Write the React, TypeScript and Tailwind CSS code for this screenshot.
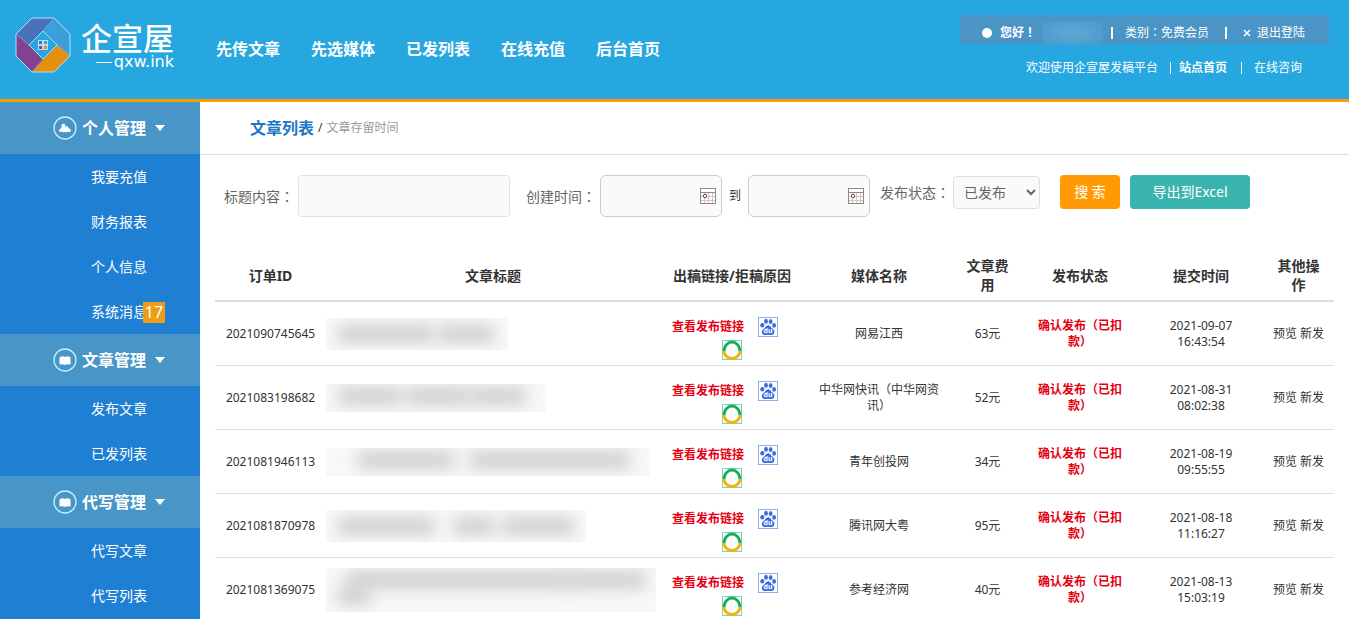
import React from 'react';

interface Article {
  id: string;
  media: string;
  fee: string;
  date: string;
  time: string;
  maskClass: string;
  blobs: string[];
}

interface MenuGroup {
  title: string;
  icon: 'user' | 'book';
  items: { label: string; badge?: number }[];
}

const navItems = ['先传文章', '先选媒体', '已发列表', '在线充值', '后台首页'];

const menuGroups: MenuGroup[] = [
  {
    title: '个人管理',
    icon: 'user',
    items: [
      { label: '我要充值' },
      { label: '财务报表' },
      { label: '个人信息' },
      { label: '系统消息', badge: 17 },
    ],
  },
  {
    title: '文章管理',
    icon: 'book',
    items: [{ label: '发布文章' }, { label: '已发列表' }],
  },
  {
    title: '代写管理',
    icon: 'book',
    items: [{ label: '代写文章' }, { label: '代写列表' }],
  },
];

const articles: Article[] = [
  {
    id: '2021090745645',
    media: '网易江西',
    fee: '63元',
    date: '2021-09-07',
    time: '16:43:54',
    maskClass: 'w-[182px] h-8',
    blobs: ['left-3 top-2 w-24 h-4', 'left-28 top-2 w-14 h-4'],
  },
  {
    id: '2021083198682',
    media: '中华网快讯（中华网资讯）',
    fee: '52元',
    date: '2021-08-31',
    time: '08:02:38',
    maskClass: 'w-[220px] h-7',
    blobs: ['left-3 top-1 w-16 h-4', 'left-20 top-1 w-16 h-4', 'left-36 top-1 w-14 h-4'],
  },
  {
    id: '2021081946113',
    media: '青年创投网',
    fee: '34元',
    date: '2021-08-19',
    time: '09:55:55',
    maskClass: 'w-[324px] h-7',
    blobs: ['left-8 top-1 w-24 h-4', 'left-36 top-1 w-40 h-4'],
  },
  {
    id: '2021081870978',
    media: '腾讯网大粤',
    fee: '95元',
    date: '2021-08-18',
    time: '11:16:27',
    maskClass: 'w-[260px] h-8',
    blobs: ['left-3 top-2 w-24 h-4', 'left-32 top-2 w-10 h-4', 'left-44 top-2 w-18 h-4'],
  },
  {
    id: '2021081369075',
    media: '参考经济网',
    fee: '40元',
    date: '2021-08-13',
    time: '15:03:19',
    maskClass: 'w-[330px] h-11',
    blobs: ['left-5 top-1 w-56 h-4', 'left-60 top-1 w-20 h-4', 'left-3 top-5 w-8 h-4'],
  },
];

// full-width mark centred in its box
const Mark = ({ children }: { children: string }) => (
  <span lang="zh-TW" className="font-['Noto_Sans_CJK_TC',sans-serif]">
    {children}
  </span>
);

const Logo = () => (
  <a href="#" className="flex items-center gap-2.5 text-white">
    <svg width="56" height="56" viewBox="0 0 56 56">
      <path d="M17 1H39L28 14L14 28L1 17Z" fill="#4a72b8" />
      <path d="M39 1L55 17V39L42 28L28 14Z" fill="#3a9fdc" />
      <path d="M1 17L14 28L28 43L17 55L1 39Z" fill="#83428f" />
      <path d="M43 28L55 39L39 55H17L28 43Z" fill="#e6900f" />
      <path d="M28 14L42 28L28 42L14 28Z" fill="#28a6e0" stroke="#a8dcf5" />
      <path d="M17 1H39L55 17V39L39 55H17L1 39V17Z" fill="none" stroke="#b5dff5" />
      <path d="M14 28L1 17M28 14L39 1M42 28L55 39M28 42L17 55" stroke="#7fb4de" strokeWidth="0.7" />
      <rect x="23.5" y="23.5" width="4" height="4" fill="#4a72b8" stroke="#b9dcf0" />
      <rect x="28.5" y="23.5" width="4" height="4" fill="#3a9fdc" stroke="#b9dcf0" />
      <rect x="23.5" y="28.5" width="4" height="4" fill="#83428f" stroke="#b9dcf0" />
      <rect x="28.5" y="28.5" width="4" height="4" fill="#e6900f" stroke="#b9dcf0" />
    </svg>
    <span className="flex flex-col items-end gap-px pt-1">
      <span className="text-[31px] leading-[29px] font-medium">企宣屋</span>
      <span className="flex items-center gap-0.5 font-['DejaVu_Sans',sans-serif] text-base leading-4">
        <span className="w-4 h-px bg-white" />
        qxw.ink
      </span>
    </span>
  </a>
);

const GroupIcon = ({ type }: { type: 'user' | 'book' }) => (
  <svg width="24" height="24" viewBox="0 0 24 24">
    <circle cx="12" cy="12" r="11" fill="none" stroke="#c9ecfa" strokeWidth="1.3" />
    {type === 'user' ? (
      <path
        d="M6 15.5C6 13.5 7 12.5 8.5 12.2C8 9 9 7.8 10.5 7.8C12.2 7.8 12.6 9.5 12.2 11C13 9.8 15.5 9.6 15.4 12.2C17 12.5 18 13.3 18 15.5Q12 17 6 15.5Z"
        fill="#fff"
      />
    ) : (
      <path d="M6.5 9.5Q9.5 7.5 12 9Q14.5 7.5 17.5 9.5V16.5Q14.5 15.8 12 17Q9.5 15.8 6.5 16.5Z" fill="#fff" />
    )}
  </svg>
);

const CalendarIcon = () => (
  <svg width="16" height="16" viewBox="0 0 16 16" className="absolute right-1.5 top-[13px] pointer-events-none">
    <rect x="0.5" y="0.5" width="15" height="15" fill="#fff" stroke="#8b8b8b" />
    <path d="M0.5 4.5H15.5" stroke="#8b8b8b" />
    <path d="M1 8.5H15M1 12.5H15M4.5 5V15M8.5 5V15M12.5 5V15" stroke="#cfc6c2" />
    <circle cx="5" cy="8" r="1.7" fill="#fff" stroke="#8a3a34" />
  </svg>
);

const BaiduIcon = () => (
  <svg width="20" height="20" viewBox="0 0 20 20">
    <rect x="0.5" y="0.5" width="19" height="19" fill="#fff" stroke="#8fb2e0" />
    <g fill="#3f68e4">
      <ellipse cx="4.3" cy="8.3" rx="2" ry="2.3" />
      <ellipse cx="8" cy="4.3" rx="1.9" ry="2.5" />
      <ellipse cx="12.6" cy="4.4" rx="1.9" ry="2.5" />
      <ellipse cx="16.1" cy="8.4" rx="1.9" ry="2.3" />
      <path d="M10.2 8.2C12 8.2 12.6 9.8 13.8 11C15.4 12.4 16.8 13.4 16.4 15.6C16 17.8 14 18.3 12.6 18Q10.2 17.5 7.8 18C6.2 18.3 4.2 17.8 3.9 15.6C3.6 13.4 5.2 12.4 6.6 11C7.8 9.8 8.4 8.2 10.2 8.2Z" />
    </g>
    <text x="10" y="16" textAnchor="middle" fill="#fff" className="text-[7px] font-bold">
      du
    </text>
  </svg>
);

const SoIcon = () => (
  <svg width="20" height="20" viewBox="0 0 20 20">
    <rect x="0.5" y="0.5" width="19" height="19" fill="#fff" stroke="#8ecfa0" />
    <path d="M2 11A8 9 0 0 1 18 11" fill="none" stroke="#17b35c" strokeWidth="3" />
    <path d="M2 11A8 7.5 0 0 0 18 11" fill="none" stroke="#e8b71c" strokeWidth="3" />
  </svg>
);

const Header = () => (
  <header className="flex h-[102px] shrink-0 items-start justify-between border-b-[3px] border-[#ff9900] bg-[#27a7e0] text-white">
    <div className="flex pl-[15px] pt-[17px]">
      <Logo />
      <nav className="ml-[42px] flex items-center gap-[31px] pt-2 text-base font-bold">
        {navItems.map((item) => (
          <a key={item} href="#" className="whitespace-nowrap">
            {item}
          </a>
        ))}
      </nav>
    </div>

    <div className="mr-5 flex flex-col items-end whitespace-nowrap pt-[15px] text-xs">
      <div className="flex h-[29px] items-center rounded bg-[#4a94c6] pl-[22px] pr-6 pt-1.5">
        <span className="h-2.5 w-2.5 rounded-full bg-white" />
        <span className="ml-2 w-9 font-bold">
          您好<Mark>！</Mark>
        </span>
        <span className="ml-[7px] h-6 w-[60px] rounded-sm bg-[radial-gradient(ellipse,#62a8d2,#4599cf)]" />
        <span className="ml-2 h-3 w-0.5 bg-white" />
        <span className="ml-3">
          类别<Mark>：</Mark>免费会员
        </span>
        <span className="ml-4 h-3 w-0.5 bg-white" />
        <a href="#" className="ml-4 flex items-center gap-1.5">
          <svg width="8" height="8" viewBox="0 0 8 8">
            <path d="M1 1L7 7M7 1L1 7" stroke="#fff" strokeWidth="1.5" />
          </svg>
          退出登陆
        </a>
      </div>
      <div className="mr-[27px] mt-3.5 flex items-center leading-5">
        <span>欢迎使用企宣屋发稿平台</span>
        <span className="ml-3 h-3 w-px bg-white" />
        <a href="#" className="ml-2 font-bold">
          站点首页
        </a>
        <span className="ml-3.5 h-3 w-px bg-white" />
        <a href="#" className="ml-3">
          在线咨询
        </a>
      </div>
    </div>
  </header>
);

const Sidebar = () => (
  <aside className="w-[200px] shrink-0 bg-[#1f7fd3] text-white">
    {menuGroups.map((group) => (
      <div key={group.title}>
        <button className="flex h-[52px] w-full items-center bg-[#4796c7] pl-[53px] text-base font-bold">
          <GroupIcon type={group.icon} />
          <span className="ml-[5px]">{group.title}</span>
          <span className="ml-[9px] border-x-[5px] border-t-[6px] border-x-transparent border-t-white" />
        </button>
        <ul>
          {group.items.map((item) => (
            <li key={item.label} className="flex h-[45px] items-center pl-[91px] text-sm">
              <a href="#" className="relative">
                {item.label}
                {item.badge && (
                  <span className="absolute -right-[18px] top-0 h-[21px] w-[22px] bg-[#ee9b16] text-center text-base leading-[21px]">
                    {item.badge}
                  </span>
                )}
              </a>
            </li>
          ))}
        </ul>
      </div>
    ))}
  </aside>
);

const FilterBar = () => (
  <form className="flex items-start pl-6 pt-5 text-sm text-[#666]">
    <div className="flex h-[42px] items-center">
      <label htmlFor="title" className="w-[74px]">
        标题内容<Mark>：</Mark>
      </label>
      <input id="title" type="text" className="h-[42px] w-[212px] rounded border border-[#e0e0e0] bg-[#fafafa] px-2" />
      <label htmlFor="start" className="ml-4 w-[74px]">
        创建时间<Mark>：</Mark>
      </label>
      <span className="relative">
        <input
          id="start"
          type="text"
          className="block h-[42px] w-[122px] rounded-md border border-[#ccc] bg-[#fafafa] pl-2 pr-6"
        />
        <CalendarIcon />
      </span>
      <label htmlFor="end" className="ml-[7px] w-[19px] text-xs text-[#333]">
        到
      </label>
      <span className="relative">
        <input
          id="end"
          type="text"
          className="block h-[42px] w-[122px] rounded-md border border-[#ccc] bg-[#fafafa] pl-2 pr-6"
        />
        <CalendarIcon />
      </span>
    </div>
    <div className="flex h-[34px] items-center">
      <label htmlFor="status" className="ml-2.5 w-[73px]">
        发布状态<Mark>：</Mark>
      </label>
      <select id="status" className="h-[33px] w-[87px] rounded border border-[#e0e0e0] bg-[#fafafa] pl-1.5">
        <option>已发布</option>
      </select>
      <button type="button" className="ml-5 h-[34px] w-[60px] rounded bg-[#ff9a03] text-white">
        搜 索
      </button>
      <button type="button" className="ml-2.5 h-[34px] w-[120px] rounded bg-[#3ab4ae] text-white">
        导出到Excel
      </button>
    </div>
  </form>
);

const ArticleTable = () => (
  <table className="w-full table-fixed border-separate border-spacing-0 text-center text-xs leading-4 text-[#333]">
    <colgroup>
      <col className="w-[111px]" />
      <col />
      <col className="w-[144px]" />
      <col className="w-[150px]" />
      <col className="w-[67px]" />
      <col className="w-[118px]" />
      <col className="w-[124px]" />
      <col className="w-[71px]" />
    </colgroup>
    <thead>
      <tr className="h-[52px] text-sm leading-[19px]">
        {['订单ID', '文章标题', '出稿链接/拒稿原因', '媒体名称', '文章费用', '发布状态', '提交时间', '其他操作'].map((name) => (
          <th key={name} className="border-b-2 border-[#ddd] px-2 font-bold">
            {name}
          </th>
        ))}
      </tr>
    </thead>
    <tbody>
      {articles.map((article) => (
        <tr key={article.id} className="h-16 *:border-b *:border-[#ddd]">
          <td>{article.id}</td>
          <td>
            <div className={`relative overflow-hidden bg-[#f8f8f8] ${article.maskClass}`}>
              {article.blobs.map((blob) => (
                <span key={blob} className={`absolute bg-[#cbcbcb] blur-[8px] ${blob}`} />
              ))}
            </div>
          </td>
          <td className="px-2 pt-2.5">
            <div className="flex flex-wrap items-center justify-center gap-y-[3px]">
              <a href="#" className="font-bold text-[#e60012]">
                查看发布链接
              </a>
              <a href="#" aria-label="百度" className="mx-3.5">
                <BaiduIcon />
              </a>
              <a href="#" aria-label="360" className="mx-3.5">
                <SoIcon />
              </a>
            </div>
          </td>
          <td className="px-2">{article.media}</td>
          <td className="px-2">{article.fee}</td>
          <td className="px-2 font-bold text-[#e60012]">确认发布（已扣款）</td>
          <td className="px-2">
            {article.date} {article.time}
          </td>
          <td className="px-2 whitespace-nowrap">
            <a href="#">预览</a> <a href="#">新发</a>
          </td>
        </tr>
      ))}
    </tbody>
  </table>
);

const App = () => {
  return (
    <div
      lang="zh-CN"
      className="flex h-screen flex-col overflow-hidden bg-white font-['Noto_Sans','Noto_Sans_CJK_SC',sans-serif]"
    >
      <Header />
      <div className="flex flex-1">
        <Sidebar />
        <main className="min-w-0 flex-1">
          <div className="flex h-[53px] items-center gap-1 border-b border-[#ddd] pl-[50px] text-xs text-[#999]">
            <h1 className="text-base font-bold text-[#1d76c6]">文章列表</h1>
            <span className="text-[#333]">/</span>
            <span>文章存留时间</span>
          </div>
          <FilterBar />
          <div className="px-[15px] pt-[33px]">
            <ArticleTable />
          </div>
        </main>
      </div>
    </div>
  );
};

export default App;
